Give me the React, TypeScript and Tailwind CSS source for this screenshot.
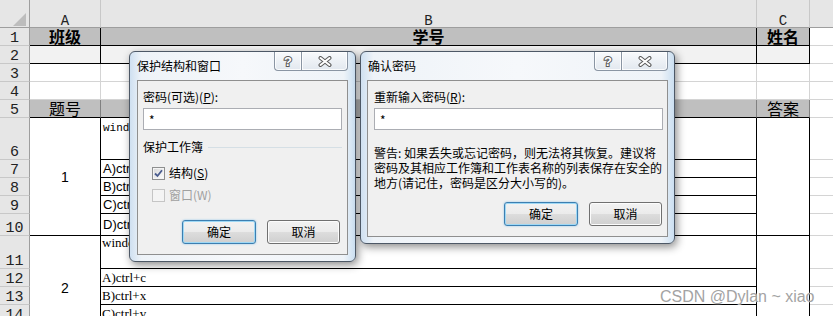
import React from "react";

const RN =
  "bg-[#e6e6e6] border-r border-b border-r-[#9e9e9e] border-b-[#c8c8c8] flex items-end justify-center font-['Liberation_Mono',monospace] text-[15px] leading-[12px] text-[#222]";
const CH =
  "bg-[#e6e6e6] border-r border-b border-r-[#c8c8c8] border-b-[#9e9e9e] flex items-end justify-center font-['Liberation_Mono',monospace] text-[14px] leading-[10px] pb-[1px] text-[#222]";
const GR = "border-r border-b border-[#d4d4d4]";
const DG = "border-b border-[#d4d4d4]";
const FILL2 = "bg-[#f2f2f2] border-r border-b border-black";
const HD =
  "bg-[#bfbfbf] border-r border-b border-black flex items-end justify-center pb-[1px] font-['Noto_Sans_CJK_SC',sans-serif] font-bold text-[16px] leading-[16px] text-black";
const HD5 =
  "bg-[#bfbfbf] border-r border-b border-r-[#808080] border-b-black flex items-end justify-center pb-[1px] font-['Noto_Sans_CJK_SC',sans-serif] text-[16px] leading-[16px] text-black";
const MERGE =
  "row-span-5 border-r border-b border-black flex items-center justify-center font-['Liberation_Sans',sans-serif] text-[14px] leading-none text-black";
const MERGEC = "row-span-5 border-r border-b border-black";
const OPT =
  "border-r border-b border-black flex items-center pl-[2px] font-['Liberation_Sans',sans-serif] text-[13px] leading-none whitespace-nowrap overflow-hidden text-black";
const OPTS =
  "border-r border-b border-black flex items-center pl-[1px] font-['Liberation_Serif',serif] text-[13px] leading-none whitespace-nowrap overflow-hidden text-black";

function Sheet() {
  return (
    <div className="grid grid-cols-[30px_71px_656px_53px_1fr] grid-rows-[28px_18px_18px_18px_18px_18px_42px_18px_18px_18px_22px_33px_18px_18px_18px_18px]">
      {/* header */}
      <div className="bg-[#e6e6e6] border-r border-b border-r-[#9e9e9e] border-b-[#9e9e9e] relative">
        <svg className="absolute left-0 top-0" width="29" height="27" viewBox="0 0 29 27">
          <polygon points="26,13 26,26 13,26" fill="#bdbdbd" />
        </svg>
      </div>
      <div className={CH}>A</div>
      <div className={CH}>B</div>
      <div className={CH}>C</div>
      <div className="bg-[#e6e6e6] border-b border-b-[#9e9e9e]" />

      {/* row 1 */}
      <div className={RN}>1</div>
      <div className={HD}>班级</div>
      <div className={HD}>学号</div>
      <div className={HD}>姓名</div>
      <div className={DG} />

      {/* row 2 */}
      <div className={RN}>2</div>
      <div className={FILL2} />
      <div className={FILL2} />
      <div className={FILL2} />
      <div className={DG} />

      {/* row 3 */}
      <div className={RN}>3</div>
      <div className={GR} />
      <div className={GR} />
      <div className={GR} />
      <div className={DG} />

      {/* row 4 */}
      <div className={RN}>4</div>
      <div className={GR} />
      <div className={GR} />
      <div className={GR} />
      <div className={DG} />

      {/* row 5 */}
      <div className={RN}>5</div>
      <div className={HD5}>题号</div>
      <div className={HD5} />
      <div className={HD5}>答案</div>
      <div className={DG} />

      {/* row 6 */}
      <div className={RN}>6</div>
      <div className={MERGE}>1</div>
      <div className="border-r border-b border-black pl-[2px] pt-[3px] font-['Liberation_Mono','Noto_Sans_CJK_SC',monospace] text-[11px] leading-[14px] text-black whitespace-nowrap overflow-hidden">
        windows中复制的快捷键是（ ）
      </div>
      <div className={MERGEC} />
      <div className={DG} />

      {/* rows 7-10 */}
      <div className={RN}>7</div>
      <div className={OPT}>A)ctrl+c</div>
      <div className={DG} />
      <div className={RN}>8</div>
      <div className={OPT}>B)ctrl+x</div>
      <div className={DG} />
      <div className={RN}>9</div>
      <div className={OPT}>C)ctrl+v</div>
      <div className={DG} />
      <div className={RN}>10</div>
      <div className={OPT}>D)ctrl+a</div>
      <div className={DG} />

      {/* row 11 */}
      <div className={RN}>11</div>
      <div className={MERGE}>2</div>
      <div className="border-r border-b border-black pl-[1px] pt-0 font-['Liberation_Serif','Noto_Sans_CJK_SC',serif] text-[13px] leading-[14px] text-black whitespace-nowrap overflow-hidden">
        windows中剪切的快捷键是（ ）
      </div>
      <div className={MERGEC} />
      <div className={DG} />

      {/* rows 12-15 */}
      <div className={RN}>12</div>
      <div className={OPTS}>A)ctrl+c</div>
      <div className={DG} />
      <div className={RN}>13</div>
      <div className={OPTS}>B)ctrl+x</div>
      <div className={DG} />
      <div className={RN}>14</div>
      <div className={OPTS}>C)ctrl+v</div>
      <div className={DG} />
      <div className={RN} />
      <div className={OPTS} />
      <div className={DG} />
    </div>
  );
}

function TitleButtons() {
  return (
    <div className="flex">
      <div className="w-[27px] h-[19px] border-l border-b border-[#8a95a3] rounded-bl-[4px] bg-[linear-gradient(#f8fafc,#e2e8ef)] shadow-[inset_0_0_0_1px_rgba(255,255,255,0.8)] flex items-center justify-center">
        <svg width="12" height="14" viewBox="0 0 12 14">
          <text
            x="6"
            y="12"
            textAnchor="middle"
            fontFamily="Liberation Sans, sans-serif"
            fontWeight="bold"
            fontSize="13"
            fill="#ffffff"
            stroke="#5a5a5a"
            strokeWidth="2"
            paintOrder="stroke"
          >
            ?
          </text>
        </svg>
      </div>
      <div className="w-[47px] h-[19px] border border-t-0 border-[#8a95a3] rounded-br-[4px] bg-[linear-gradient(#f8fafc,#e2e8ef)] shadow-[inset_0_0_0_1px_rgba(255,255,255,0.8)] flex items-center justify-center">
        <svg width="14" height="11" viewBox="0 0 14 11">
          <path d="M2.5 2 L11.5 9 M11.5 2 L2.5 9" stroke="#5a5a5a" strokeWidth="4" strokeLinecap="round" />
          <path d="M2.5 2 L11.5 9 M11.5 2 L2.5 9" stroke="#ffffff" strokeWidth="2" strokeLinecap="round" />
        </svg>
      </div>
    </div>
  );
}

function Check({ checked, disabled }: { checked?: boolean; disabled?: boolean }) {
  return (
    <div
      className={
        disabled
          ? "w-[13px] h-[13px] border border-[#c5c5c5] bg-[#f4f4f4]"
          : "w-[13px] h-[13px] border border-[#8e8f8f] bg-[linear-gradient(135deg,#d6d6d6,#ffffff)] shadow-[inset_0_0_0_1px_#f4f4f4] flex items-center justify-center"
      }
    >
      {checked && (
        <svg width="9" height="9" viewBox="0 0 9 9">
          <path d="M1 4.5 L3.5 7 L8 1.2" fill="none" stroke="#4a5c8e" strokeWidth="1.8" />
        </svg>
      )}
    </div>
  );
}

function OkButton() {
  return (
    <div className="w-[74px] h-[24px] rounded-[3px] border border-[#3c7fb1] bg-[linear-gradient(#f2f2f2_0%,#ebebeb_50%,#dddddd_50%,#cfcfcf_100%)] shadow-[inset_0_0_0_1px_#9ed8f5,0_0_2px_rgba(60,160,230,0.6)] flex items-center justify-center text-[12px] leading-none text-black">
      确定
    </div>
  );
}

function CancelButton() {
  return (
    <div className="w-[73px] h-[24px] rounded-[3px] border border-[#707070] bg-[linear-gradient(#f2f2f2_0%,#ebebeb_50%,#dddddd_50%,#cfcfcf_100%)] shadow-[inset_0_0_0_1px_#fcfcfc] flex items-center justify-center text-[12px] leading-none text-black">
      取消
    </div>
  );
}

function Dialog1() {
  return (
    <div className="absolute left-[129px] top-[51px] w-[227px] h-[211px] rounded-[6px] border border-[#4d5866] shadow-[2px_3px_9px_rgba(0,0,0,0.45)] bg-[linear-gradient(90deg,#cfe0f1,#eef3f8_5%,#f6f8fb_50%,#eef3f8_95%,#cbdff1)] flex flex-col px-[7px] pb-[6px] font-['Noto_Sans_CJK_SC',sans-serif] text-[12px] text-black">
      <div className="h-[28px] flex justify-between items-start">
        <div className="pt-[6px] leading-[16px]">保护结构和窗口</div>
        <TitleButtons />
      </div>
      <div className="flex-1 bg-[#f0f0f0] border border-[#8f8f8f] flex flex-col px-[5px]">
        <div className="mt-[8px] leading-[16px]">
          密码(可选)(<span className="underline">P</span>):
        </div>
        <div className="mt-[3px] h-[22px] border border-[#abadb3] bg-white pl-[5px] pt-[3px] leading-[16px]">*</div>
        <div className="mt-[9px] flex items-center gap-[5px] leading-[16px]">
          <span>保护工作簿</span>
          <div className="flex-1 h-px bg-[#d5dfe5]" />
        </div>
        <div className="mt-[10px] ml-[9px] flex items-center gap-[4px] leading-[16px]">
          <Check checked />
          <span>
            结构(<span className="underline">S</span>)
          </span>
        </div>
        <div className="mt-[6px] ml-[9px] flex items-center gap-[4px] leading-[16px] text-[#a0a0a0]">
          <Check disabled />
          <span>窗口(W)</span>
        </div>
        <div className="mt-[17px] mr-[2px] flex justify-end gap-[11px]">
          <OkButton />
          <CancelButton />
        </div>
      </div>
    </div>
  );
}

function Dialog2() {
  return (
    <div className="absolute left-[360px] top-[51px] w-[315px] h-[193px] rounded-[6px] border border-[#4d5866] shadow-[2px_3px_9px_rgba(0,0,0,0.45)] bg-[linear-gradient(90deg,#cfe0f1,#eef3f8_4%,#f6f8fb_50%,#eef3f8_96%,#cbdff1)] flex flex-col px-[6px] pb-[6px] font-['Noto_Sans_CJK_SC',sans-serif] text-[12px] text-black">
      <div className="h-[28px] flex justify-between items-start">
        <div className="pt-[6px] pl-[1px] leading-[16px]">确认密码</div>
        <TitleButtons />
      </div>
      <div className="flex-1 bg-[#f0f0f0] border border-[#8f8f8f] flex flex-col pl-[6px] pr-[4px]">
        <div className="mt-[8px] leading-[16px]">
          重新输入密码(<span className="underline">R</span>):
        </div>
        <div className="mt-[3px] h-[22px] border border-[#abadb3] bg-white pl-[5px] pt-[3px] leading-[16px]">*</div>
        <div className="mt-[15px] leading-[15px] whitespace-nowrap">
          警告: 如果丢失或忘记密码，则无法将其恢复。建议将
          <br />
          密码及其相应工作簿和工作表名称的列表保存在安全的
          <br />
          地方(请记住，密码是区分大小写的)。
        </div>
        <div className="mt-[12px] mr-[1px] flex justify-end gap-[11px]">
          <OkButton />
          <CancelButton />
        </div>
      </div>
    </div>
  );
}

export default function App() {
  return (
    <div className="relative w-[833px] h-[316px] overflow-hidden bg-white">
      <Sheet />
      <Dialog1 />
      <Dialog2 />
      <div className="absolute left-[660px] top-[288px] font-['Liberation_Sans',sans-serif] text-[16px] leading-[18px] text-[#a3a3a3] whitespace-nowrap [text-shadow:0_0_2px_#ffffff]">
        CSDN @Dylan ~ xiao
      </div>
    </div>
  );
}
